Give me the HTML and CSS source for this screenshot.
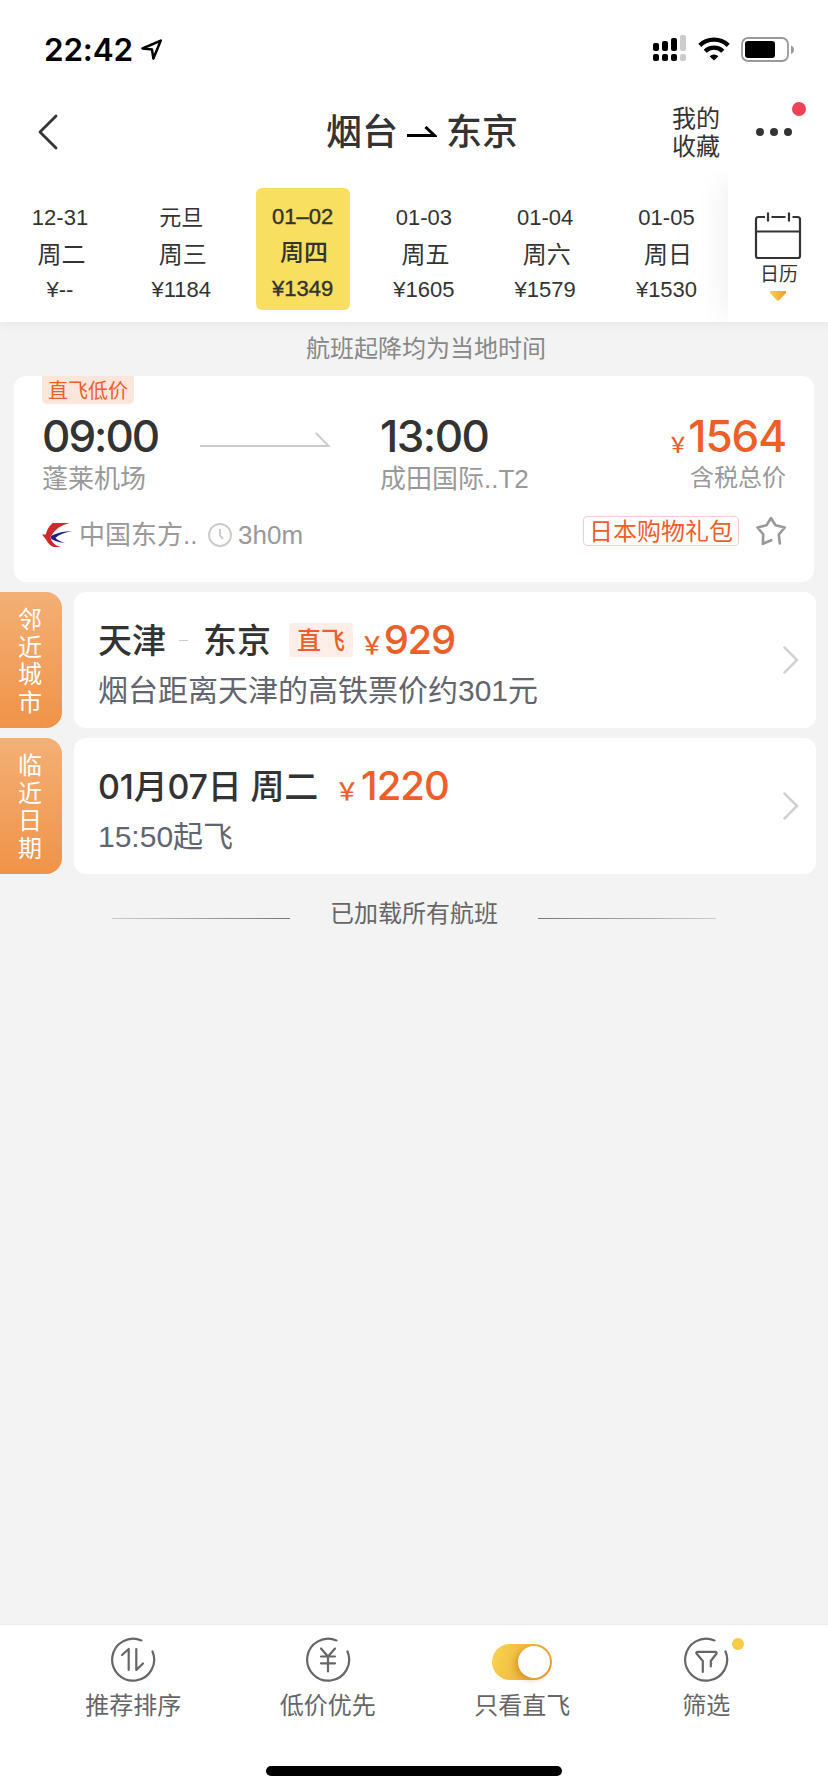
FILE: index.html
```html
<!DOCTYPE html>
<html lang="zh-CN">
<head>
<meta charset="utf-8">
<title>烟台 - 东京</title>
<link rel="stylesheet" href="styles.css">
</head>
<body>
<div class="app">
  <header class="top">
    <div class="status">
      <div class="status-time">22:42
        <svg class="locate" width="22" height="22" viewBox="0 0 22 22"><path d="M1.5 9.5 19.8 1.6 12.4 19.6 11 10.6Z" fill="none" stroke="#000" stroke-width="2.5" stroke-linejoin="round"/></svg>
      </div>
      <div class="status-icons">
        <svg width="34" height="27" viewBox="0 0 34 27">
          <g fill="#000"><rect x="0" y="8" width="6" height="8" rx="2"/><rect x="9" y="6" width="6" height="10" rx="2"/><rect x="18" y="3" width="6" height="13" rx="2"/><rect x="0" y="19" width="6" height="7" rx="2"/><rect x="9" y="19" width="6" height="7" rx="2"/><rect x="18" y="19" width="6" height="7" rx="2"/></g>
          <g fill="#ccc"><rect x="27" y="0" width="6" height="16" rx="2"/><rect x="27" y="19" width="6" height="7" rx="2"/></g>
        </svg>
        <svg class="wifi" width="32" height="24" viewBox="0 0 32 24"><g fill="none" stroke="#000" stroke-width="4.4"><path d="M1.8 8.3a20.6 20.6 0 0 1 28.4 0"/><path d="M7.2 14.2a12.6 12.6 0 0 1 17.6 0"/></g><path d="M16 23.6 11.6 19.3a6.4 6.4 0 0 1 8.8 0Z"/></svg>
        <svg class="battery" width="54" height="26" viewBox="0 0 54 26"><rect x="1" y="1" width="46" height="23" rx="6" fill="none" stroke="#999" stroke-width="1.8"/><rect x="4" y="4" width="30" height="17" rx="3"/><path d="M50 8.5c4 1.5 4 7 0 8.500z" fill="#999"/></svg>
      </div>
    </div>
    <nav class="nav">
      <svg class="back" width="22" height="38" viewBox="0 0 22 38"><path d="M19 3 3 19 19 35" fill="none" stroke="#333" stroke-width="2.8" stroke-linecap="round" stroke-linejoin="round"/></svg>
      <h1 class="route">烟台<svg width="30" height="14" viewBox="0 0 30 14"><path d="M0 9.500H27.500L18.500 1" fill="none" stroke="#000" stroke-width="3"/></svg>东京</h1>
      <div class="fav">我的<br>收藏</div>
      <div class="more"><i></i><i></i><i></i><b class="red-dot"></b></div>
    </nav>
    <div class="dates">
      <div class="day"><span>12-31</span><strong>周二</strong><span>¥--</span></div>
      <div class="day"><span>元旦</span><strong>周三</strong><span>¥1184</span></div>
      <div class="day on"><span>01–02</span><strong>周四</strong><span>¥1349</span></div>
      <div class="day"><span>01-03</span><strong>周五</strong><span>¥1605</span></div>
      <div class="day"><span>01-04</span><strong>周六</strong><span>¥1579</span></div>
      <div class="day"><span>01-05</span><strong>周日</strong><span>¥1530</span></div>
      <div class="calendar">
        <svg width="48" height="48" viewBox="0 0 48 48"><g fill="none" stroke="#333" stroke-width="2.2"><path d="M11 5H4.500Q2 5 2 7.500V44Q2 46 4 46H44Q46 46 46 44V7.500Q46 5 43.500 5H38.500M17.500 5H31.500M2 19.500H46"/><path d="M14 .5V9.500M35 .5V9.500"/></g></svg>
        <span>日历</span>
        <svg class="caret" width="16" height="10" viewBox="0 0 16 10"><defs><linearGradient id="gold"><stop offset="0" stop-color="#f8d347"/><stop offset="1" stop-color="#ef9838"/></linearGradient></defs><path d="M0 0H16V2L8.800 9.500Q8 10 7.200 9.500L0 2Z" fill="url(#gold)"/></svg>
      </div>
    </div>
  </header>

  <main class="list">
    <p class="notice">航班起降均为当地时间</p>
    <section class="flight">
      <span class="low">直飞低价</span>
      <div class="legs">
        <div class="dep"><div class="time">09:00</div><div class="airport">蓬莱机场</div></div>
        <svg class="leg-arrow" width="132" height="16" viewBox="0 0 132 16"><path d="M0 14H128.500L116 1" fill="none" stroke="#ccc" stroke-width="2"/></svg>
        <div class="arr"><div class="time">13:00</div><div class="airport">成田国际..T2</div></div>
        <div class="fare"><div class="price"><small>￥</small>1564</div><div class="tax">含税总价</div></div>
      </div>
      <div class="meta">
        <svg class="airline" width="30" height="24" viewBox="0 0 30 24"><path d="M10.700 0H27.500Q17.500 2.500 12 9 7 14.500 10.500 19 13.500 23 19 24H11.500Q6.500 22 4 16.500L0 11.500H3.800Q5.500 4 10.700 0Z" fill="#d0282e"/><path d="M30 8.200Q18 8.300 9.800 12.500 7.500 14.500 10.300 16.500 15 19.200 23 20 15.500 17.500 13.500 14.700 19 10 30 8.200Z" fill="#1d2088" stroke="#fff" stroke-width=".8" paint-order="stroke"/></svg>
        <span class="carrier">中国东方..</span>
        <svg class="clock" width="24" height="24" viewBox="0 0 24 24"><g fill="none" stroke="#ccc" stroke-width="2"><circle cx="12" cy="12" r="11"/><path d="M12 6V12.500L15 16"/></g></svg>
        <span class="duration">3h0m</span>
        <span class="gift">日本购物礼包</span>
        <svg class="star" width="32" height="30" viewBox="0 0 32 30"><path d="M15.300 24.200 6.800 27.800 7.300 18.500 1.500 11.500 10.500 9.300 15 2 19.500 9.300 28.800 11.500 22.800 18.500 23.800 27.500" fill="none" stroke="#999" stroke-width="2.600" stroke-linecap="round" stroke-linejoin="round"/></svg>
      </div>
    </section>

    <section class="hint">
      <div class="tab">邻近城市</div>
      <div class="panel">
        <div class="info">
          <div class="line"><b>天津</b><i class="dash"></i><b>东京</b><span class="direct">直飞</span><span class="cost"><small>￥</small>929</span></div>
          <div class="desc">烟台距离天津的高铁票价约301元</div>
        </div>
        <svg class="go" width="18" height="30" viewBox="0 0 18 30"><path d="M2.500 2.500 15 15 2.500 27.500" fill="none" stroke="#d1d1d6" stroke-width="2.500" stroke-linecap="round"/></svg>
      </div>
    </section>
    <section class="hint">
      <div class="tab">临近日期</div>
      <div class="panel">
        <div class="info">
          <div class="line"><b class="date">01月07日 周二</b><span class="cost near"><small>￥</small>1220</span></div>
          <div class="desc">15:50起飞</div>
        </div>
        <svg class="go" width="18" height="30" viewBox="0 0 18 30"><path d="M2.500 2.500 15 15 2.500 27.500" fill="none" stroke="#d1d1d6" stroke-width="2.500" stroke-linecap="round"/></svg>
      </div>
    </section>
    <div class="end"><i></i><span>已加载所有航班</span><i class="right"></i></div>
  </main>

  <footer class="foot">
    <div class="tools">
      <div class="tool">
        <svg width="46" height="46" viewBox="0 0 46 46"><g fill="none" stroke="#666" stroke-width="2.200" stroke-linecap="round" stroke-linejoin="round"><path d="M31.500 3.400A21 21 0 1 0 42.500 14.500"/><path d="M12 18 18.700 12V33M26.300 12V33L33 26.500"/></g></svg>
        <span>推荐排序</span>
      </div>
      <div class="tool">
        <svg width="46" height="46" viewBox="0 0 46 46"><g fill="none" stroke="#666" stroke-width="2.200" stroke-linecap="round" stroke-linejoin="round"><path d="M31.500 3.400A21 21 0 1 0 42.500 14.500"/><path d="M16 11.500 23 19.500 30 11.500M23 19.500V34.500M16 19.500H30M16 26.300H30"/></g></svg>
        <span>低价优先</span>
      </div>
      <div class="tool">
        <div class="switch"><i></i></div>
        <span>只看直飞</span>
      </div>
      <div class="tool last">
        <svg width="46" height="46" viewBox="0 0 46 46"><g fill="none" stroke="#666" stroke-width="2.200" stroke-linecap="round" stroke-linejoin="round"><path d="M31.500 3.400A21 21 0 1 0 42.500 14.500"/><path d="M19.800 35V24L13.500 16.500Q13 14.800 14.500 14.800H32.500Q34 14.800 33.500 16.500L27.800 24V29.500"/></g></svg>
        <span>筛选</span>
        <b class="gold-dot"></b>
      </div>
    </div>
    <div class="home"></div>
  </footer>
</div>
</body>
</html>
```
FILE: styles.css
```css
* { box-sizing: border-box; }
body { margin: 0; background: #f3f3f3; color: #333; font-family: "Liberation Sans", "Noto Sans CJK SC", sans-serif; }
svg { display: block; flex: none; }
i, b, small { font-style: normal; }
p, h1 { margin: 0; }
.app { width: 828px; height: 1792px; display: flex; flex-direction: column; }

.top { height: 322px; background: #fff; box-shadow: 0 2px 10px rgba(0, 0, 0, .06); position: relative; }
.status { height: 92px; padding: 35px 33px 0 44px; display: flex; justify-content: space-between; }
.status-time { display: flex; gap: 8px; height: 30px; font: 600 31.500px/30px Inter, sans-serif; color: #000; letter-spacing: -.2px; }
.locate { margin-top: 4px; }
.status-icons { display: flex; }
.wifi { margin: 2px 0 0 11px; }
.battery { margin: 2px 0 0 11px; }

.nav { height: 80px; display: flex; position: relative; align-items: flex-start; }
.back { margin: 21px 0 0 37px; }
.route { width: 192px; margin: 14px 0 0 267px; display: flex; align-items: center; justify-content: space-between; font-size: 36px; line-height: 54px; font-weight: 500; white-space: nowrap; }
.fav { margin: 13px 0 0 154px; width: 48px; font-size: 24px; line-height: 28px; }
.more { position: relative; display: flex; gap: 6px; margin: 36px 0 0 36px; }
.more i { width: 8px; height: 8px; border-radius: 50%; background: #333; }
.red-dot { position: absolute; left: 36px; top: -26px; width: 14px; height: 14px; border-radius: 50%; background: #ee4256; }

.dates { height: 150px; display: flex; overflow: hidden; }
.day { flex: none; width: 94px; height: 122px; margin: 16px 27.300px 0 0; padding-top: 12px; border-radius: 6px; display: flex; flex-direction: column; align-items: center; font-size: 22px; line-height: 36px; }
.day:first-child { margin-left: 13px; }
.day strong { font-size: 24px; font-weight: 400; padding: 1px 0 0 3px; height: 36px; }
.day.on { background: #f9df60; padding-top: 11px; -webkit-text-stroke: .4px #333; }
.day.on strong { font-weight: 500; padding-top: 0; -webkit-text-stroke: 0; }
.calendar { position: absolute; right: 0; top: 172px; width: 100px; height: 150px; background: #fff; padding-top: 40px; display: flex; flex-direction: column; align-items: center; box-shadow: -10px 0 32px -8px rgba(0, 0, 0, .08); clip-path: inset(0 0 0 -50px); }
.calendar span { font-size: 19px; line-height: 26px; margin: 2px 0 0 2px; }
.caret { margin-top: 3px; }

.list { flex: 1; }
.notice { height: 54px; line-height: 54px; text-align: center; color: #888; font-size: 24px; padding-left: 24px; }
.flight { width: 800px; height: 206px; margin-left: 14px; border-radius: 12px; background: #fff; padding: 0 28px; }
.low { display: block; width: 92px; height: 28px; background: #fce5db; color: #ec5f2a; border-radius: 0 0 5px 5px; font-size: 20px; line-height: 30px; text-align: center; }
.legs { display: flex; height: 110px; }
.time, .price, .cost { font-family: Inter, "Noto Sans CJK SC", sans-serif; font-weight: 500; font-feature-settings: "calt" 0; white-space: nowrap; }
.time { font-size: 44px; line-height: 56px; letter-spacing: -1.500px; margin-top: 4px; height: 54px; }
.dep .time { letter-spacing: -2px; }
.airport, .tax { color: #999; font-size: 26px; line-height: 34px; white-space: nowrap; }
.dep { width: 158px; }
.leg-arrow { margin-top: 28px; }
.arr { margin-left: 48px; width: 180px; }
.fare { margin-left: auto; text-align: right; }
.price { font-size: 44px; line-height: 56px; margin-top: 4px; height: 54px; color: #ec5f2a; letter-spacing: -1.100px; }
.price small { font-size: 21px; font-weight: 500; margin-right: 1px; }
.tax { font-size: 24px; line-height: 32px; }
.meta { display: flex; color: #999; font-size: 26px; }
.airline { margin-top: 9px; }
.carrier { margin-left: 7px; line-height: 42px; width: 129px; }
.clock { margin-top: 9px; }
.duration { margin-left: 6px; line-height: 42px; }
.gift { margin: 2px 0 0 auto; width: 156px; height: 30px; border: 1px solid #f9ccd0; border-radius: 4px; color: #ec5f2a; font-size: 24px; line-height: 30px; text-align: center; }
.star { margin: 2px -2px 0 17px; }

.hint { display: flex; height: 136px; margin-top: 10px; }
.tab { width: 62px; border-radius: 0 16px 16px 0; background: linear-gradient(#f3b076, #f09348); color: #fff; font-size: 24px; line-height: 27.500px; padding: 14px 20px 0 18px; word-break: break-all; }
.panel { width: 742px; margin-left: 12px; border-radius: 12px; background: #fff; padding: 0 16px 0 24px; display: flex; justify-content: space-between; }
.line { height: 50px; margin-top: 24px; display: flex; line-height: 50px; font-size: 34px; white-space: nowrap; }
.line b { font-weight: 500; }
.dash { width: 9px; height: 1px; background: #ccc; margin: 24px 15px 0 13px; }
.direct { width: 64px; height: 34px; border-radius: 4px; background: #fdeee7; color: #ec5f2a; font-size: 24px; line-height: 35px; text-align: center; margin: 7px 0 0 18px; font-weight: 500; }
.cost { color: #ec5f2a; font-size: 40px; letter-spacing: -1.300px; margin: -1px 0 0 7px; }
.cost small { font-size: 24px; font-weight: 500; margin-right: 1px; }
.line .date { font-family: Inter, "Noto Sans CJK SC", sans-serif; letter-spacing: -.200px; }
.cost.near { margin-left: 17px; letter-spacing: -1px; }
.near small { margin-right: 3px; }
.desc { font-size: 30px; line-height: 50px; color: #62656f; white-space: nowrap; }
.go { margin-top: 53px; }

.end { display: flex; justify-content: center; align-items: center; margin-top: 22px; height: 36px; font-size: 24px; line-height: 36px; color: #666; }
.end span { width: 248px; text-align: center; }
.end i { width: 178px; height: 1px; margin-top: 8px; background: linear-gradient(90deg, #ccc, #777); }
.end .right { background: linear-gradient(90deg, #777, #ccc); }

.foot { height: 168px; background: #fff; border-top: 1px solid #ebebeb; }
.tools { height: 141px; display: grid; grid-template-columns: 194.500px 194.500px 194.500px 173.500px; padding-left: 36px; }
.tool { position: relative; display: flex; flex-direction: column; align-items: center; padding-top: 12px; color: #666; font-size: 24px; }
.tool span { line-height: 36px; margin-top: 5px; }
.switch { width: 60px; height: 36px; margin: 7px 0 3px; border-radius: 18px; padding: 2px; display: flex; justify-content: flex-end; background: linear-gradient(110deg, #f8d74d, #e99c38); }
.switch i { width: 32px; height: 32px; border-radius: 50%; background: #fff; box-shadow: -3px 2px 6px rgba(170, 90, 0, .35); }
.gold-dot { position: absolute; left: 112px; top: 13px; width: 12px; height: 12px; border-radius: 50%; background: #f6cb45; }
.home { width: 296px; height: 10px; border-radius: 5px; background: #000; margin: 0 auto; }
```
